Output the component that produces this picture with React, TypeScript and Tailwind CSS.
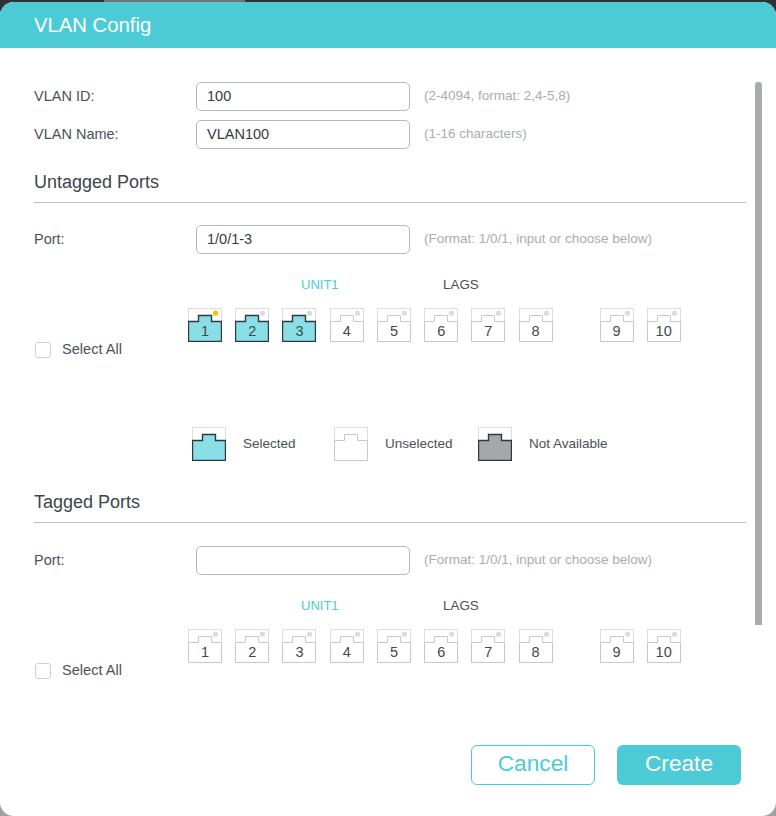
import React from 'react';

const labelFont = "font-['Liberation_Sans',Arial,sans-serif]";

type PortState = 'selected' | 'unselected' | 'disabled';

const PortShape: React.FC<{ state: PortState; led?: string }> = ({ state, led }) => {
  const fill = state === 'selected' ? '#8adfe7' : state === 'disabled' ? '#a6a7aa' : '#ffffff';
  const stroke = state === 'unselected' ? '#c8c8c8' : '#2c3a3f';
  return (
    <svg width="34" height="34" viewBox="0 0 34 34" className="block">
      <rect x="0.5" y="0.5" width="33" height="33" fill="#fff" stroke="#dddddd" />
      <path
        d="M0.5 13.5H10.5V7.5H23.5V13.5H33.5V33.5H0.5Z"
        fill={fill}
        stroke={stroke}
        strokeWidth={state === 'unselected' ? 1 : 1.4}
      />
      {led && <circle cx="27.5" cy="5.2" r="2.6" fill={led} />}
    </svg>
  );
};

const Port: React.FC<{ n: number; selected?: boolean; active?: boolean }> = ({ n, selected, active }) => (
  <div className="relative w-[34px] h-[34px]">
    <PortShape state={selected ? 'selected' : 'unselected'} led={active ? '#f6c400' : '#dcdcdc'} />
    <span className="absolute left-0 right-0 top-[15px] text-center text-[14.5px] leading-[17px] text-[#3d4a50]">{n}</span>
  </div>
);

const PortGrid: React.FC<{ selected?: number[]; active?: boolean }> = ({ selected = [], active }) => {
  const unit = [1, 2, 3, 4, 5, 6, 7, 8];
  return (
    <div className="flex">
      <div className="w-[154px] pt-[48px] flex items-center pl-[1px] h-[100px]">
        <span className="w-[16px] h-[16px] border border-[#cfcfcf] rounded-[3px] bg-white" />
        <span className="ml-[11px] text-[14.6px] text-[#495258]">Select All</span>
      </div>
      <div>
        <div className="flex text-[13px] leading-[16px] pt-[1px]">
          <span className="ml-[113px] w-[142px] text-[#4acbd6]">UNIT1</span>
          <span className="text-[13.4px] text-[#495258]">LAGS</span>
        </div>
        <div className="flex mt-[15px]">
          <div className="flex gap-[13.24px]">
            {unit.map((n) => (
              <Port key={n} n={n} selected={selected.includes(n)} active={active && n === 1} />
            ))}
          </div>
          <div className="flex gap-[13px] ml-[47px]">
            <Port n={9} />
            <Port n={10} />
          </div>
        </div>
      </div>
    </div>
  );
};

const Field: React.FC<{ label: string; value?: string; hint: string }> = ({ label, value, hint }) => (
  <div className="flex items-center h-[29px]">
    <label className="w-[162px] text-[14.5px] text-[#495258]">{label}</label>
    <div className="w-[214px] h-[29px] border border-[#b4b8ba] rounded-[5px] px-[10px] flex items-center text-[14.5px] text-[#333b40] bg-white">
      {value}
    </div>
    <span className="ml-[14px] text-[13.5px] text-[#a8adaf]">{hint}</span>
  </div>
);

const SectionTitle: React.FC<{ title: string }> = ({ title }) => (
  <div className="w-[712px] h-[31px] border-b border-[#b9bdbf] text-[18px] leading-[21px] text-[#3c464b]">{title}</div>
);

const LegendItem: React.FC<{ state: PortState; label: string; width: string }> = ({ state, label, width }) => (
  <div className={`flex items-center ${width}`}>
    <PortShape state={state} />
    <span className="ml-[17px] text-[13.5px] text-[#495258]">{label}</span>
  </div>
);

export default function App() {
  return (
    <div className={`w-[776px] h-[816px] bg-linear-to-b from-[#2f3336] from-10% to-[#a0a0a0] to-90% overflow-hidden ${labelFont}`}>
      <div className="h-[2px] ml-[104px] w-[141px] bg-[#6f7477]" />
      <div className="relative h-[814px] bg-white rounded-[14px] overflow-hidden">
        <div className="h-[46px] bg-[#4ccbd6] pl-[34px] pt-[11px] text-[20.3px] leading-[24px] text-white">VLAN Config</div>

        <div className="pl-[34px] pt-[34px]">
          <Field label="VLAN ID:" value="100" hint="(2-4094, format: 2,4-5,8)" />
          <div className="mt-[9px]">
            <Field label="VLAN Name:" value="VLAN100" hint="(1-16 characters)" />
          </div>

          <div className="mt-[23px]">
            <SectionTitle title="Untagged Ports" />
          </div>
          <div className="mt-[22px]">
            <Field label="Port:" value="1/0/1-3" hint="(Format: 1/0/1, input or choose below)" />
          </div>
          <div className="mt-[22px]">
            <PortGrid selected={[1, 2, 3]} active />
          </div>

          <div className="flex ml-[158px] mt-[51px]">
            <LegendItem state="selected" label="Selected" width="w-[142px]" />
            <LegendItem state="unselected" label="Unselected" width="w-[144px]" />
            <LegendItem state="disabled" label="Not Available" width="" />
          </div>

          <div className="mt-[31px]">
            <SectionTitle title="Tagged Ports" />
          </div>
          <div className="mt-[23px]">
            <Field label="Port:" hint="(Format: 1/0/1, input or choose below)" />
          </div>
          <div className="mt-[22px]">
            <PortGrid />
          </div>
        </div>

        <div className="absolute left-[755px] top-[80px] w-[7px] h-[543px] rounded-t-[3px] bg-[#a9acae]" />

        <div className="absolute left-[471px] top-[743px] flex gap-[22px]">
          <button className="w-[124px] h-[40px] pb-[4px] border border-[#4ccbd6] rounded-[6px] bg-white text-[22.7px] text-[#4ccbd6]">Cancel</button>
          <button className="w-[124px] h-[40px] pb-[4px] rounded-[6px] bg-[#4ccbd6] text-[22.7px] text-white">Create</button>
        </div>
      </div>
    </div>
  );
}
